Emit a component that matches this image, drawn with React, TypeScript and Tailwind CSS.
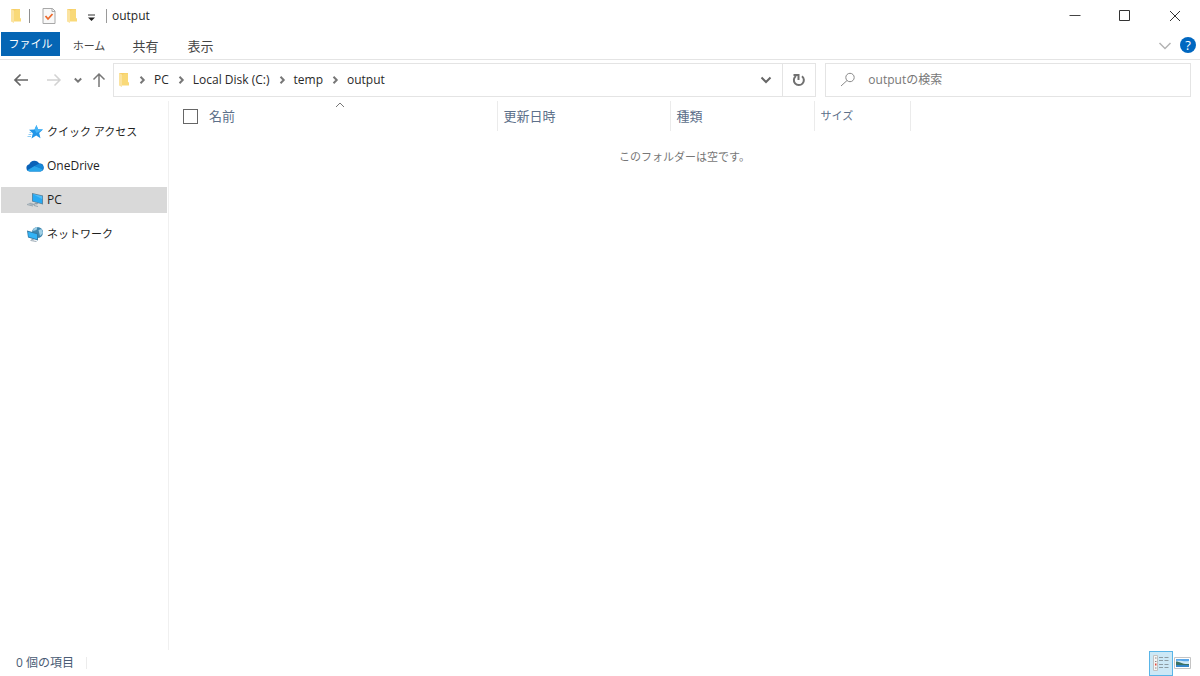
import { useState } from "react";
import clsx from "clsx";

const RIBBON_TABS = ["ホーム", "共有", "表示"];

const CRUMBS = ["PC", "Local Disk (C:)", "temp", "output"];

const NAV_ITEMS = [
  { label: "クイック アクセス", Icon: StarIcon, kana: true },
  { label: "OneDrive", Icon: CloudIcon },
  { label: "PC", Icon: PcIcon },
  { label: "ネットワーク", Icon: NetworkIcon, kana: true },
];

function FolderIcon() {
  return (
    <svg width="12" height="16" viewBox="0 0 12 16" aria-hidden="true">
      <path d="M1 1h9v11.5H4z" fill="#f6cf68" />
      <path d="M1 1l3 1.500v12.500L1 13.500z" fill="#fbe3a0" />
      <path d="M4 3l3-1.500h3V10l1 .5v3H4z" fill="#f9d978" />
    </svg>
  );
}

function CheckedPageIcon() {
  return (
    <svg width="14" height="16" viewBox="0 0 14 16" aria-hidden="true">
      <path d="M1 .5h9.500L13 3v12.500H1z" fill="#f8f8f8" stroke="#a8a8a8" />
      <path d="M10 .5V3.500h3" fill="none" stroke="#a8a8a8" />
      <path d="M3.500 8l2.500 3 4.500-5" fill="none" stroke="#ec6a2c" strokeWidth="1.800" />
    </svg>
  );
}

function StarIcon() {
  return (
    <svg width="18" height="16" viewBox="0 0 18 16" aria-hidden="true">
      <path d="M10.500 1l1.500 4.300 5 .3-3.800 3.300 1.300 5.300-4.300-2.600-4.700 3 1.300-5.300L3 5.800l5.500-.4z" fill="#2196e8" />
      <path d="M10.500 1l1.500 4.300 5 .3-6.500 3.400L8.500 5.400z" fill="#46b5f7" />
      <path d="M3.500 8.500h2M2.500 10.500h3M1.500 12.500h3.500" stroke="#90cdf4" />
    </svg>
  );
}

function CloudIcon() {
  return (
    <svg width="18" height="16" viewBox="0 0 18 16" aria-hidden="true">
      <path d="M4 13.500A3.700 3.700 0 0 1 3.300 6.200 5.500 5.500 0 0 1 13.300 5.600a4 4 0 0 1 1.200 7.900z" fill="#0a62b8" />
      <path d="M8.500 8l4.800-2.400a4 4 0 0 1 3.700 5.700z" fill="#1588d8" />
      <path d="M1.300 12.300L8.500 8l8.300 3.300a3 3 0 0 1-2.500 2.200H4a4 4 0 0 1-2.700-1.200z" fill="#28a5ea" />
    </svg>
  );
}

function PcIcon() {
  return (
    <svg width="18" height="16" viewBox="0 0 18 16" aria-hidden="true">
      <path d="M6 1l11 2.500v9L6 9.500z" fill="#5d8299" />
      <path d="M6.800 2l9.400 2.200v7.200L6.800 8.900z" fill="#27a9f3" />
      <path d="M6.800 2l9.400 2.200v3z" fill="#53bdf7" />
      <path d="M9.500 10.500l3 .8-1.500 1.200-3-.8z" fill="#8f9da7" />
      <path d="M4.500 10.500l6 1.700-3.500 1.300-6-1.500z" fill="#b3bec6" />
      <path d="M1 12.500l6 1.500M8 13.500l4 1M3.500 11.500l5.500 1.400" stroke="#98a5ae" />
    </svg>
  );
}

function NetworkIcon() {
  return (
    <svg width="18" height="16" viewBox="0 0 18 16" aria-hidden="true">
      <circle cx="11.500" cy="6.500" r="5.500" fill="#3f86ae" />
      <path d="M7.500 3c2-2.200 4-2 4-2L10.500 4 7 5zM12.500 4l3-1 1.500 4-3 3z" fill="#9fcfe6" />
      <path d="M1 4.500l11 3v7l-10-3z" fill="#327ca8" />
      <path d="M2 5.800l9 2.500v4.900l-8.300-2.400z" fill="#32b3f6" />
      <path d="M5 13l3 1M4.500 14.500l6 1" stroke="#9caab5" />
    </svg>
  );
}

function Chevron({ className = "" }: { className?: string }) {
  return (
    <svg width="8" height="8" viewBox="0 0 8 8" className={className} aria-hidden="true">
      <path d="M2.500 .8L5.700 4 2.500 7.200" fill="none" stroke="currentColor" strokeWidth="2" />
    </svg>
  );
}

function TitleBar() {
  return (
    <header className="flex h-8 items-center">
      <div className="flex flex-1 items-center pl-[10px]">
        <FolderIcon />
        <span className="ml-[7px] h-[14px] w-px bg-[#8f8f8f]" />
        <button type="button" aria-label="プロパティ" className="ml-3">
          <CheckedPageIcon />
        </button>
        <button type="button" aria-label="新しいフォルダー" className="ml-[10px]">
          <FolderIcon />
        </button>
        <button type="button" aria-label="クイック アクセス ツール バーのカスタマイズ" className="ml-[9px]">
          <svg width="9" height="8" viewBox="0 0 9 8" aria-hidden="true" className="mt-1">
            <path d="M1 1h7" stroke="#333" />
            <path d="M1 3.500h7L4.500 7z" fill="#222" />
          </svg>
        </button>
        <span className="ml-[10px] h-[14px] w-px bg-[#9a9a9a]" />
        <h1 className="ml-[5px] text-[12px] text-[#1f1f1f]">output</h1>
      </div>
      <button type="button" aria-label="最小化" className="flex h-8 w-[50px] items-center justify-center">
        <svg width="12" height="12" viewBox="0 0 12 12" aria-hidden="true">
          <path d="M.5 5.500h11" stroke="#444" />
        </svg>
      </button>
      <button type="button" aria-label="最大化" className="flex h-8 w-[49px] items-center justify-center">
        <svg width="12" height="12" viewBox="0 0 12 12" aria-hidden="true">
          <path d="M.5.5h10v10H.5z" fill="none" stroke="#333" />
        </svg>
      </button>
      <button type="button" aria-label="閉じる" className="flex h-8 w-[51px] items-center justify-center">
        <svg width="12" height="12" viewBox="0 0 12 12" aria-hidden="true">
          <path d="M1 1l10 10M11 1L1 11" stroke="#333" />
        </svg>
      </button>
    </header>
  );
}

function Ribbon() {
  return (
    <nav className="flex h-7 items-start border-b border-[#e4e4e4] text-[13px]">
      <button type="button" className="ml-px h-6 w-[59px] bg-[#0565b4] text-[11px] text-white">
        ファイル
      </button>
      <div className="flex flex-1">
        {RIBBON_TABS.map((tab) => (
          <button key={tab} type="button" className={clsx("h-[27px] text-[#454545]", tab === "ホーム" ? "w-[58px] text-[11px]" : "w-[55px]")}>
            {tab}
          </button>
        ))}
      </div>
      <button type="button" aria-label="リボンの展開" className="mt-[10px] mr-2">
        <svg width="14" height="8" viewBox="0 0 14 8" aria-hidden="true">
          <path d="M1.500 1L7 6.500 12.500 1" fill="none" stroke="#b3b3b3" strokeWidth="1.500" />
        </svg>
      </button>
      <button type="button" aria-label="ヘルプ" className="mt-[5px] mr-1 flex size-4 items-center justify-center rounded-full bg-[#0067c0] text-[13px] text-white">
        ?
      </button>
    </nav>
  );
}

function AddressRow() {
  const [query, setQuery] = useState("");

  return (
    <div className="flex items-center pt-[3px] pr-[9px]">
      <div className="flex w-[113px] shrink-0 items-center">
        <button type="button" aria-label="戻る" className="ml-[13px]">
          <svg width="16" height="14" viewBox="0 0 16 14" aria-hidden="true">
            <path d="M15 7H2M7.500 1.500L2 7l5.500 5.500" fill="none" stroke="#666" strokeWidth="1.700" />
          </svg>
        </button>
        <button type="button" aria-label="進む" disabled className="ml-[17px]">
          <svg width="16" height="14" viewBox="0 0 16 14" aria-hidden="true">
            <path d="M1 7h13M8.500 1.500L14 7l-5.500 5.500" fill="none" stroke="#d2d2d2" strokeWidth="1.500" />
          </svg>
        </button>
        <button type="button" aria-label="最近表示した場所" className="ml-3 text-[#777]">
          <Chevron className="rotate-90" />
        </button>
        <button type="button" aria-label="上へ" className="ml-[10px]">
          <svg width="14" height="16" viewBox="0 0 14 16" aria-hidden="true">
            <path d="M7 15V2M1.500 7.500L7 2l5.500 5.500" fill="none" stroke="#777" strokeWidth="1.500" />
          </svg>
        </button>
      </div>

      <div className="flex h-[34px] min-w-0 flex-[704] items-center border border-[#e4e4e4]">
        <span className="ml-1">
          <FolderIcon />
        </span>
        <ol className="flex flex-1 items-center text-[12px] text-[#292929]">
          {CRUMBS.map((crumb) => (
            <li key={crumb} className="flex items-center">
              <Chevron className="mx-2 shrink-0 text-[#777]" />
              <a href="#" className="whitespace-nowrap">
                {crumb}
              </a>
            </li>
          ))}
        </ol>
        <button type="button" aria-label="以前の場所" className="flex h-8 w-8 items-center justify-center">
          <svg width="12" height="8" viewBox="0 0 12 8" aria-hidden="true">
            <path d="M1.500 1.500L6 6l4.500-4.500" fill="none" stroke="#666" strokeWidth="2" />
          </svg>
        </button>
        <button type="button" aria-label="最新の情報に更新" className="flex h-8 w-[33px] items-center justify-center border-l border-[#e4e4e4]">
          <svg width="14" height="14" viewBox="0 0 14 14" aria-hidden="true">
            <path d="M10 3.200A5 5 0 1 1 4 3" fill="none" stroke="#707070" strokeWidth="2" />
            <path d="M1.500 2h5v5" fill="none" stroke="#707070" strokeWidth="2" />
          </svg>
        </button>
      </div>

      <label className="ml-[9px] flex h-[34px] min-w-0 flex-[365] items-center border border-[#e4e4e4]">
        <svg width="16" height="16" viewBox="0 0 16 16" aria-hidden="true" className="ml-[14px] shrink-0">
          <circle cx="10" cy="5.500" r="4.200" fill="none" stroke="#8a8a8a" />
          <path d="M7 8.500l-6 5.500" stroke="#8a8a8a" />
        </svg>
        <input
          type="search"
          aria-label="outputの検索"
          placeholder="outputの検索"
          value={query}
          onChange={(e) => setQuery(e.target.value)}
          className="ml-3 min-w-0 flex-1 text-[12px] outline-none placeholder:text-[#777]"
        />
      </label>
    </div>
  );
}

function Sidebar() {
  const [selected, setSelected] = useState("PC");

  return (
    <aside className="w-[169px] shrink-0 border-r border-[#f0f0f0] pt-[18px]">
      <ul className="space-y-2">
        {NAV_ITEMS.map(({ label, Icon, kana }) => (
          <li key={label} className="pr-px pl-px">
            <button
              type="button"
              onClick={() => setSelected(label)}
              className={clsx(
                "flex h-[26px] w-full items-center gap-[3px] pl-[25px] whitespace-nowrap text-[#1f1f1f]",
                kana ? "text-[11px]" : "text-[12px]",
                selected === label && "bg-[#d9d9d9]"
              )}
            >
              <Icon />
              {label}
            </button>
          </li>
        ))}
      </ul>
    </aside>
  );
}

function FileTable() {
  return (
    <main className="min-w-0 flex-1">
      <table className="w-full table-fixed text-left text-[13px]">
        <thead>
          <tr className="h-[30px] text-[#5d708a] [&>th]:font-normal">
            <th className="relative w-[328px] border-r border-[#ebebeb]">
              <div className="flex items-center pl-[14px]">
                <input type="checkbox" aria-label="すべて選択" className="size-[15px] appearance-none border border-[#666] bg-white" />
                <button type="button" className="ml-[11px]">名前</button>
              </div>
              <svg width="10" height="6" viewBox="0 0 10 6" aria-hidden="true" className="absolute top-px left-[166px]">
                <path d="M1 5l4-4 4 4" fill="none" stroke="#777" />
              </svg>
            </th>
            <th className="w-[173px] border-r border-[#ebebeb] pl-[6px]">
              <button type="button">更新日時</button>
            </th>
            <th className="w-36 border-r border-[#ebebeb] pl-[6px]">
              <button type="button">種類</button>
            </th>
            <th className="w-24 border-r border-[#ebebeb] pl-[6px] text-[11px]">
              <button type="button">サイズ</button>
            </th>
            <td />
          </tr>
        </thead>
        <tbody>
          <tr>
            <td colSpan={5} className="pt-4 text-center text-[11px] text-[#777]">
              このフォルダーは空です。
            </td>
          </tr>
        </tbody>
      </table>
    </main>
  );
}

function StatusBar() {
  return (
    <footer className="flex h-[26px] items-center pr-[9px] pl-4 text-[12px] text-[#4a5c75]">
      <span>0 個の項目</span>
      <span className="ml-3 h-3 w-px bg-[#ececec]" />
      <div className="ml-auto flex items-center">
        <button type="button" aria-label="詳細" aria-pressed="true" className="flex h-[25px] w-6 items-center justify-center border border-[#59b5e8] bg-[#cce8f6]">
          <svg width="18" height="16" viewBox="0 0 18 16" aria-hidden="true">
            <path d="M1.500 .5h4v15h-4z" fill="#f5f5f5" stroke="#c2c2c2" />
            <path d="M3 3h1.500M3 6.500h1.500M3 13h1.500" stroke="#888" />
            <path d="M3 9.500h1.500" stroke="#e04b3c" strokeWidth="2" />
            <path d="M7 2.500h4M12.500 2.500h4M7 5.500h4M12.500 5.500h4M7 9.500h4M12.500 9.500h4M7 12.500h4M12.500 12.500h4" stroke="#8d9ca3" />
          </svg>
        </button>
        <button type="button" aria-label="大アイコン" className="ml-px">
          <svg width="17" height="12" viewBox="0 0 17 12" aria-hidden="true">
            <path d="M.5.5h16v11H.5z" fill="#fff" stroke="#c4c4c4" />
            <path d="M2 2h13v8H2z" fill="#5ba8ea" />
            <path d="M2 4c4-1 8 1 13 0v3H2z" fill="#cfe9f8" />
            <path d="M2 4.500c4 0 6 3 13 2.500v1H2z" fill="#3c7264" />
            <path d="M2 8h13v2H2z" fill="#3486c8" />
          </svg>
        </button>
      </div>
    </footer>
  );
}

export default function App() {
  return (
    <div className="flex min-h-screen flex-col bg-white font-['Open_Sans','Noto_Sans_CJK_JP',sans-serif] leading-5">
      <TitleBar />
      <Ribbon />
      <AddressRow />
      <div className="flex flex-1 pt-1">
        <Sidebar />
        <FileTable />
      </div>
      <StatusBar />
    </div>
  );
}
